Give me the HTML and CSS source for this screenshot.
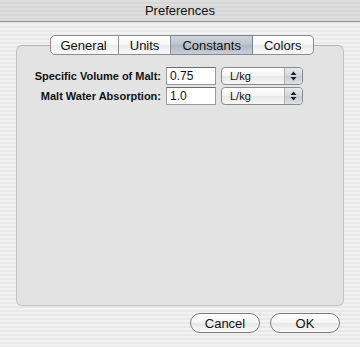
FILE: index.html
```html
<!DOCTYPE html>
<html lang="en">
<head>
	<meta charset="UTF-8">
	<title>Preferences</title>
	<link rel="stylesheet" href="styles.css">
</head>
<body>
	<div id="window">
		<div class="titlebar">Preferences</div>
		<div class="content">
			<ul class="tabs">
				<li>General</li>
				<li>Units</li>
				<li class="active">Constants</li>
				<li>Colors</li>
			</ul>
			<div class="groupbox">
				<div class="row">
					<label class="lbl">Specific Volume of Malt:</label>
					<span class="field">0.75</span>
					<span class="popup"><span class="val">L/kg</span><span class="arrows"><svg width="7" height="10" viewBox="0 0 7 10"><path d="M3.5 0.5 L6.5 4 L0.5 4 Z M3.5 9.5 L6.5 6 L0.5 6 Z" fill="#222"/></svg></span></span>
				</div>
				<div class="row">
					<label class="lbl">Malt Water Absorption:</label>
					<span class="field">1.0</span>
					<span class="popup"><span class="val">L/kg</span><span class="arrows"><svg width="7" height="10" viewBox="0 0 7 10"><path d="M3.5 0.5 L6.5 4 L0.5 4 Z M3.5 9.5 L6.5 6 L0.5 6 Z" fill="#222"/></svg></span></span>
				</div>
			</div>
			<div class="buttons">
				<span class="btn">Cancel</span>
				<span class="btn">OK</span>
			</div>
		</div>
	</div>
</body>
</html>
```

FILE: styles.css
```css
html, body{margin: 0; padding: 0;}
body{width: 360px; height: 347px; overflow: hidden; font-family: "Liberation Sans", "DejaVu Sans", sans-serif; color: #111;
	background: repeating-linear-gradient(to bottom, #f2f2f2 0, #f2f2f2 2px, #e9e9e9 2px, #e9e9e9 4px);}
ul{margin: 0; padding: 0; list-style: none;}
#window{width: 360px; height: 347px;}
.titlebar{height: 21px; line-height: 22px; text-align: center; font-size: 13px; color: #111; border-bottom: 1px solid #8e8e8e;
	background: repeating-linear-gradient(to bottom, #dedede 0, #dedede 2px, #d6d6d6 2px, #d6d6d6 4px);}
.content{padding: 13px 16px 0 16px;}
.tabs{display: flex; justify-content: center; margin-left: 3px; position: relative; z-index: 1;}
.tabs li{height: 18px; line-height: 19px; font-size: 13px; padding: 0 11px; border: 1px solid #8c8c8c; border-left: none; color: #111;
	background: linear-gradient(to bottom, #ffffff 0, #f6f6f6 50%, #ececec 51%, #f8f8f8 100%);}
.tabs li:first-child{border-left: 1px solid #8c8c8c; border-radius: 5px 0 0 5px; padding-left: 10px;}
.tabs li:last-child{border-radius: 0 5px 5px 0; padding-right: 11px;}
.tabs li.active{background: linear-gradient(to bottom, #cfd4dc 0, #bcc2cc 50%, #b0b7c3 51%, #c9ced7 100%); border-color: #7f8590;}
.groupbox{height: 238px; margin-top: -10px; background: #e3e3e3; border: 1px solid #c6c6c6; border-top-color: #b4b4b4; border-radius: 6px; padding-top: 21px;
	display: flex; flex-direction: column; gap: 2px;}
.row{display: flex; align-items: center; height: 18px;}
.lbl{width: 144px; text-align: right; font-size: 11px; font-weight: bold; color: #111;}
.field{margin-left: 5px; width: 45px; height: 16px; line-height: 17px; padding-left: 3px; font-size: 12px; background: #fff;
	border: 1px solid #9a9a9a; border-top-color: #6c6c6c;}
.popup{margin-left: 5px; width: 80px; height: 16px; display: flex; border: 1px solid #8a8a8a; border-radius: 4px; overflow: hidden;
	background: linear-gradient(to bottom, #ffffff 0, #f4f4f4 50%, #e8e8e8 51%, #f6f6f6 100%);}
.popup .val{flex: 1; font-size: 11px; line-height: 16px; padding-left: 8px;}
.popup .arrows{width: 17px; display: flex; align-items: center; justify-content: center; border-left: 1px solid #b0b0b0;
	background: linear-gradient(to bottom, #e6e9ee 0, #d2d6dd 50%, #c6cbd3 51%, #dde0e5 100%);}
.buttons{display: flex; justify-content: flex-end; gap: 10px; margin-top: 7px; margin-right: 4px;}
.btn{width: 68px; height: 18px; line-height: 19px; text-align: center; font-size: 13px; border: 1px solid #7c7c7c; border-radius: 10px;
	background: linear-gradient(to bottom, #ffffff 0, #f4f4f4 50%, #e6e6e6 51%, #fafafa 100%);}
```
